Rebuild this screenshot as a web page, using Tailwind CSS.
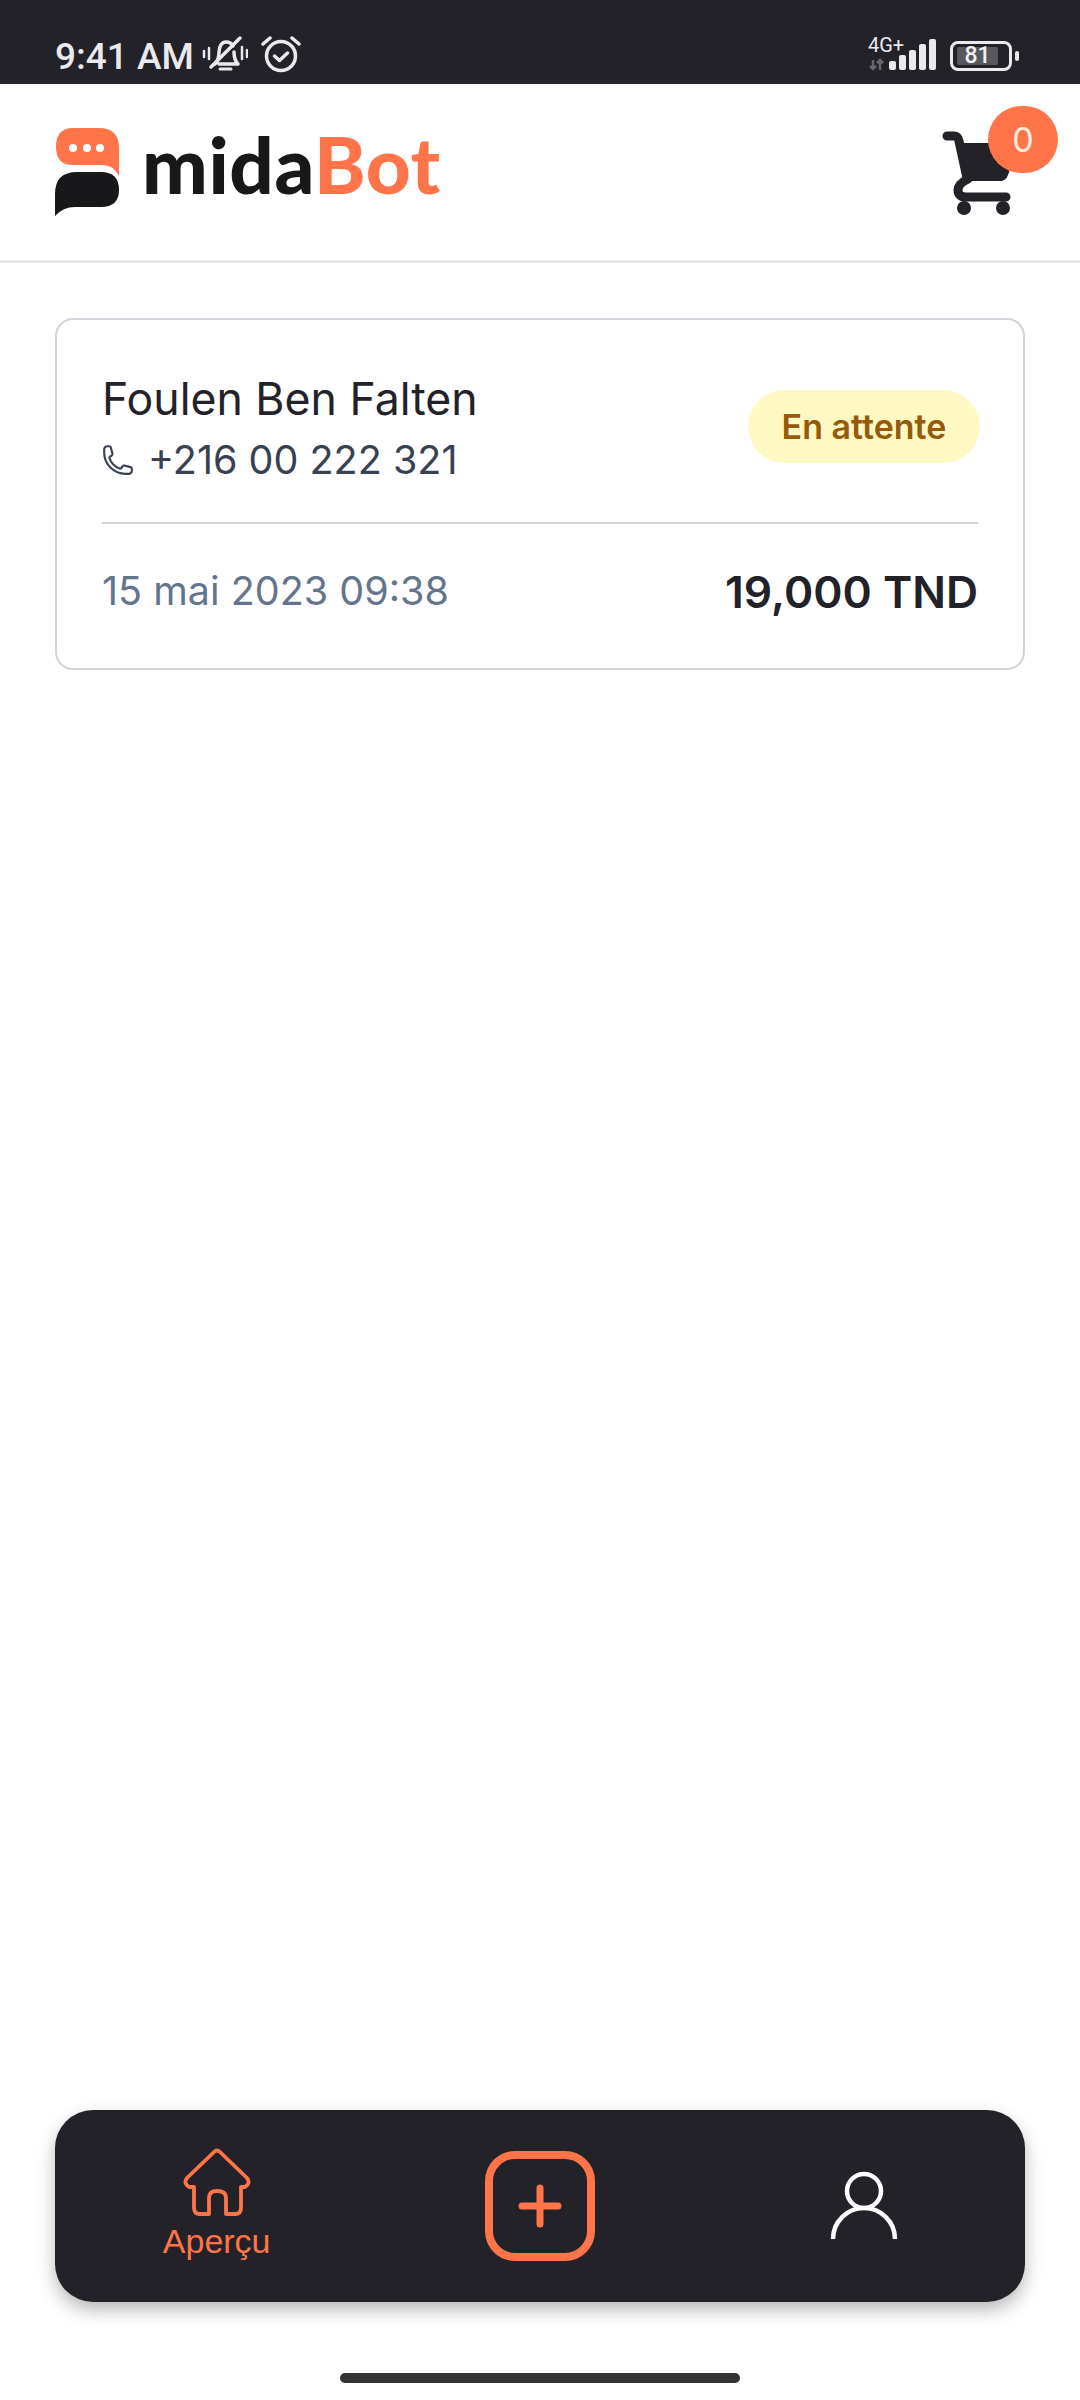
<!DOCTYPE html>
<html lang="fr">
<head>
<meta charset="utf-8">
<script src="https://cdn.jsdelivr.net/npm/@tailwindcss/browser@4"></script>
</head>
<body class="bg-white">
<div class="w-[1080px] h-[2400px] flex flex-col bg-white font-['Inter',sans-serif] overflow-hidden">
  <!-- status bar -->
  <div class="h-[84px] shrink-0 bg-[#222228] flex items-end justify-between pl-[55px] pr-[61px] pb-[13px] text-[#e9e9ee]">
    <div class="flex items-center h-[38px] mb-[-2px]">
      <span class="font-['Roboto',sans-serif] font-medium text-[37px] leading-[38px] pt-[6px]">9:41 AM</span>
      <svg class="ml-[8px]" width="46" height="38" viewBox="0 0 46 38" fill="none" stroke="#e9e9ee" stroke-width="3.5" stroke-linecap="round" stroke-linejoin="round">
        <path d="M13 29c3-3 4-6 4-12 0-6 3-10 7-10s6 2 7 4M32 17c0 5 1 9 4 12H17"/>
        <path d="M18 34h11" stroke-width="3"/>
        <path d="M9 32 38 3"/>
        <path d="M7 13v11M2 16v6M40 12v12M45 15v7" stroke-width="2.5"/>
      </svg>
      <svg class="ml-[13px]" width="40" height="38" viewBox="0 0 40 38" fill="none" stroke="#e9e9ee" stroke-width="3.5" stroke-linecap="round" stroke-linejoin="round">
        <circle cx="20" cy="21" r="14.5"/>
        <path d="M13.5 21l5 4.5 8-7.5"/>
        <path d="M2 9l7-6M38 9l-7-6"/>
      </svg>
    </div>
    <div class="flex items-end">
      <div class="relative w-[68px] h-[32px]">
        <span class="absolute left-0 top-[-4px] font-['Roboto',sans-serif] text-[20px] leading-[20px]">4G+</span>
        <svg class="absolute left-0 bottom-0" width="68" height="32" viewBox="0 0 68 32" fill="#e9e9ee">
          <path d="M5 21v9M2 27l3 3 3-3M12 31v-10M9 24l3-3 3 3" stroke="#66666c" stroke-width="2.5" fill="none"/>
          <rect x="21" y="22" width="7" height="9" rx="2"/>
          <rect x="31" y="16" width="7" height="15" rx="2"/>
          <rect x="41" y="11" width="7" height="20" rx="2"/>
          <rect x="51" y="5" width="7" height="26" rx="2"/>
          <rect x="61" y="0" width="7" height="31" rx="2"/>
        </svg>
      </div>
      <div class="ml-[14px] flex items-center h-[30px]">
        <div class="w-[62px] h-[30px] border-[3px] border-[#e9e9ee] rounded-[8px] flex items-center pl-[4px]">
          <div class="w-[41px] h-[18px] bg-[#57575d] rounded-[2px] flex items-center justify-center font-['Roboto',sans-serif] font-medium text-[23px] leading-[18px] text-[#f0f0f2]">81</div>
        </div>
        <div class="ml-[3px] w-[4px] h-[10px] bg-[#e9e9ee] rounded-[2px]"></div>
      </div>
    </div>
  </div>

  <!-- header -->
  <div class="h-[179px] shrink-0 border-b-[3px] border-[#e5e7eb] flex items-start justify-between pl-[55px] pr-[22px]">
    <div class="flex items-start pt-[44px]">
      <svg width="64" height="88" viewBox="0 0 64 88">
        <path d="M18 0H44Q64 0 64 20V48Q58 36 46 37H18Q1 37 1 19Q1 0 18 0Z" fill="#ff7448"/>
        <circle cx="18" cy="20" r="4" fill="#fff"/><circle cx="32" cy="20" r="4" fill="#fff"/><circle cx="45" cy="20" r="4" fill="#fff"/>
        <path d="M22 44H46Q64 44 64 62Q64 79 46 79H20Q8 79 0 88V66Q0 44 22 44Z" fill="#18181b"/>
      </svg>
      <div class="ml-[23px] mt-[-14px] font-['Lato',sans-serif] font-black text-[78px] leading-[100px] tracking-[0.6px] text-[#18181b]">mida<span class="text-[#ff7448]">Bot</span></div>
    </div>
    <div class="relative w-[116px] h-[140px] mt-[22px]">
      <svg class="absolute left-0 top-[24px]" width="80" height="92" viewBox="942 130 80 92">
        <path d="M947 136H954Q958 136 959 141L967 178" fill="none" stroke="#222228" stroke-width="9" stroke-linecap="round"/>
        <path d="M960 143H1020L1008 175Q1006 181 1000 181H968Z" fill="#222228"/>
        <path d="M968 179Q958 184 958 190Q958 197 966 197H1006" fill="none" stroke="#222228" stroke-width="9" stroke-linecap="round"/>
        <circle cx="964" cy="208" r="7" fill="#222228"/>
        <circle cx="1003" cy="208" r="7" fill="#222228"/>
      </svg>
      <div class="absolute right-0 top-0 w-[70px] h-[67px] rounded-full bg-[#ff7448] flex items-center justify-center text-[#ffeedd] text-[34px] leading-none">0</div>
    </div>
  </div>

  <!-- content -->
  <div class="flex-1 px-[55px] pt-[55px]">
    <div class="h-[352px] border-2 border-[#d1d5db] rounded-[18px] px-[45px] pt-[46px]">
      <div class="flex items-center justify-between h-[125px]">
        <div>
          <div class="text-[44.6px] leading-[60px] pt-[3px] box-content text-[#222228]">Foulen Ben Falten</div>
          <div class="flex items-center h-[62px] text-[#374151]">
            <svg width="34" height="34" viewBox="0 0 24 24" fill="none" stroke="#374151" stroke-width="1.5" stroke-linecap="round" stroke-linejoin="round" class="ml-[-1px]">
              <path d="M2.25 6.75c0 8.284 6.716 15 15 15h2.25a2.25 2.25 0 002.25-2.25v-1.372c0-.516-.351-.966-.852-1.091l-4.423-1.106c-.44-.11-.902.055-1.173.417l-.97 1.293c-.282.376-.769.542-1.21.38a12.035 12.035 0 01-7.143-7.143c-.162-.441.004-.928.38-1.21l1.293-.97c.363-.271.527-.734.417-1.173L6.963 3.102a1.125 1.125 0 00-1.091-.852H4.5A2.25 2.25 0 002.25 4.5v2.25z"/>
            </svg>
            <span class="ml-[13px] text-[39.5px] leading-[60px]">+216 00 222 321</span>
          </div>
        </div>
        <div class="w-[232px] h-[73px] mb-[5px] mr-[-2px] rounded-full bg-[#fef9c3] flex items-center justify-center text-[#975a0a] font-semibold text-[34px]">En attente</div>
      </div>
      <div class="mt-[31px] h-[2px] bg-[#d1d5db]"></div>
      <div class="mt-[38px] flex items-center justify-between h-[60px]">
        <span class="text-[39.5px] text-[#64748b]">15 mai 2023 09:38</span>
        <span class="text-[44.4px] font-semibold text-[#222228]">19,000 TND</span>
      </div>
    </div>
  </div>

  <!-- bottom nav -->
  <div class="mx-[55px] h-[192px] shrink-0 rounded-[38px] bg-[#222228] shadow-[0_8px_18px_rgba(0,0,0,0.28)] grid grid-cols-3 items-center">
    <div class="flex flex-col items-center gap-[4px] pb-[5px]">
      <svg width="70" height="70" viewBox="0 0 70 70" fill="none" stroke="#ff7448" stroke-width="3.8" stroke-linecap="round" stroke-linejoin="round">
        <path d="M12 39V60Q12 66 18 66H27V50Q27 43 35 43Q44 43 44 50V66H53Q59 66 59 60V39H63Q69 35 65 30L38 4Q35 1 32 4L5 30Q1 35 7 39Z"/>
      </svg>
      <span class="font-['Liberation_Sans',sans-serif] text-[34px] leading-[38px] text-[#ff7448]">Aperçu</span>
    </div>
    <div class="flex justify-center">
      <div class="w-[110px] h-[110px] rounded-[30px] border-[8px] border-[#ff7448] flex items-center justify-center">
        <svg width="44" height="44" viewBox="0 0 44 44" fill="none" stroke="#ff7448" stroke-width="7" stroke-linecap="round">
          <path d="M22 4V40M4 22H40"/>
        </svg>
      </div>
    </div>
    <div class="flex justify-center pl-[2px]">
      <svg width="70" height="70" viewBox="0 0 70 70" fill="none" stroke="#fff" stroke-width="4.5">
        <circle cx="35" cy="20" r="17"/>
        <path d="M4 68A31 31 0 0 1 66 68"/>
      </svg>
    </div>
  </div>

  <!-- home indicator -->
  <div class="h-[98px] shrink-0 flex justify-center pt-[71px]">
    <div class="w-[400px] h-[10px] rounded-full bg-[#333336]"></div>
  </div>
</div>
</body>
</html>
